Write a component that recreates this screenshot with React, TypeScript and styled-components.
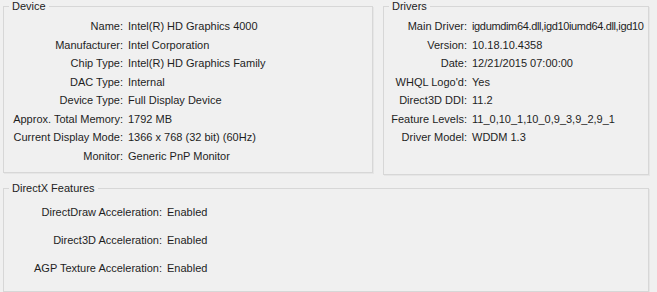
import React from 'react';
import styled, { createGlobalStyle } from 'styled-components';

const GlobalStyle = createGlobalStyle`
  html, body {
    margin: 0;
    padding: 0;
    background: #f0f0f0;
  }
  body {
    font-family: 'Liberation Sans', Arial, sans-serif;
    font-size: 11px;
    color: #1e1e1e;
    overflow: hidden;
  }
`;

const Page = styled.div`
  width: 657px;
  height: 292px;
  padding: 0 8px 0 3px;
  box-sizing: border-box;
  display: flex;
  flex-direction: column;
  gap: 7px;
`;

const TopRow = styled.div`
  display: flex;
  align-items: flex-start;
  gap: 10px;
`;

const Group = styled.fieldset<{ width?: number; height: number }>`
  margin: 0;
  padding: 0;
  width: ${({ width }) => (width ? `${width}px` : 'auto')};
  flex: ${({ width }) => (width ? 'none' : '1')};
  height: ${({ height }) => height}px;
  box-sizing: border-box;
  border: 1px solid #d7d7d7;
  box-shadow: 1px 1px 0 #e6e6e6;
  min-width: 0;
  overflow: hidden;
`;

const Legend = styled.legend`
  margin-left: 5px;
  padding: 0 3px;
  line-height: 13px;
  color: #222;
`;

const Rows = styled.div<{ labelWidth: number; rowHeight: number; top: number }>`
  display: grid;
  grid-template-columns: ${({ labelWidth }) => labelWidth}px 1fr;
  grid-auto-rows: ${({ rowHeight }) => rowHeight}px;
  align-items: center;
  column-gap: 5px;
  padding-top: ${({ top }) => top}px;
  white-space: nowrap;
`;

const Label = styled.span`
  text-align: right;
`;

const Value = styled.span<{ tight?: boolean }>`
  letter-spacing: ${({ tight }) => (tight ? '-0.35px' : 'normal')};
`;

type Item = [string, string, boolean?];

const device: Item[] = [
  ['Name:', 'Intel(R) HD Graphics 4000'],
  ['Manufacturer:', 'Intel Corporation'],
  ['Chip Type:', 'Intel(R) HD Graphics Family'],
  ['DAC Type:', 'Internal'],
  ['Device Type:', 'Full Display Device'],
  ['Approx. Total Memory:', '1792 MB'],
  ['Current Display Mode:', '1366 x 768 (32 bit) (60Hz)'],
  ['Monitor:', 'Generic PnP Monitor'],
];

const drivers: Item[] = [
  ['Main Driver:', 'igdumdim64.dll,igd10iumd64.dll,igd10', true],
  ['Version:', '10.18.10.4358'],
  ['Date:', '12/21/2015 07:00:00'],
  ["WHQL Logo'd:", 'Yes'],
  ['Direct3D DDI:', '11.2'],
  ['Feature Levels:', '11_0,10_1,10_0,9_3,9_2,9_1'],
  ['Driver Model:', 'WDDM 1.3'],
];

const features: Item[] = [
  ['DirectDraw Acceleration:', 'Enabled'],
  ['Direct3D Acceleration:', 'Enabled'],
  ['AGP Texture Acceleration:', 'Enabled'],
];

const InfoRows: React.FC<{
  items: Item[];
  labelWidth: number;
  rowHeight: number;
  top: number;
}> = ({ items, labelWidth, rowHeight, top }) => (
  <Rows labelWidth={labelWidth} rowHeight={rowHeight} top={top}>
    {items.map(([label, value, tight]) => (
      <React.Fragment key={label}>
        <Label>{label}</Label>
        <Value tight={tight}>{value}</Value>
      </React.Fragment>
    ))}
  </Rows>
);

const App: React.FC = () => (
  <>
    <GlobalStyle />
    <Page>
      <TopRow>
        <Group width={370} height={173}>
          <Legend>Device</Legend>
          <InfoRows items={device} labelWidth={119} rowHeight={18.5} top={4} />
        </Group>
        <Group height={175}>
          <Legend>Drivers</Legend>
          <InfoRows items={drivers} labelWidth={83} rowHeight={18.5} top={4} />
        </Group>
      </TopRow>
      <Group height={120}>
        <Legend>DirectX Features</Legend>
        <InfoRows items={features} labelWidth={158} rowHeight={28} top={3} />
      </Group>
    </Page>
  </>
);

export default App;
